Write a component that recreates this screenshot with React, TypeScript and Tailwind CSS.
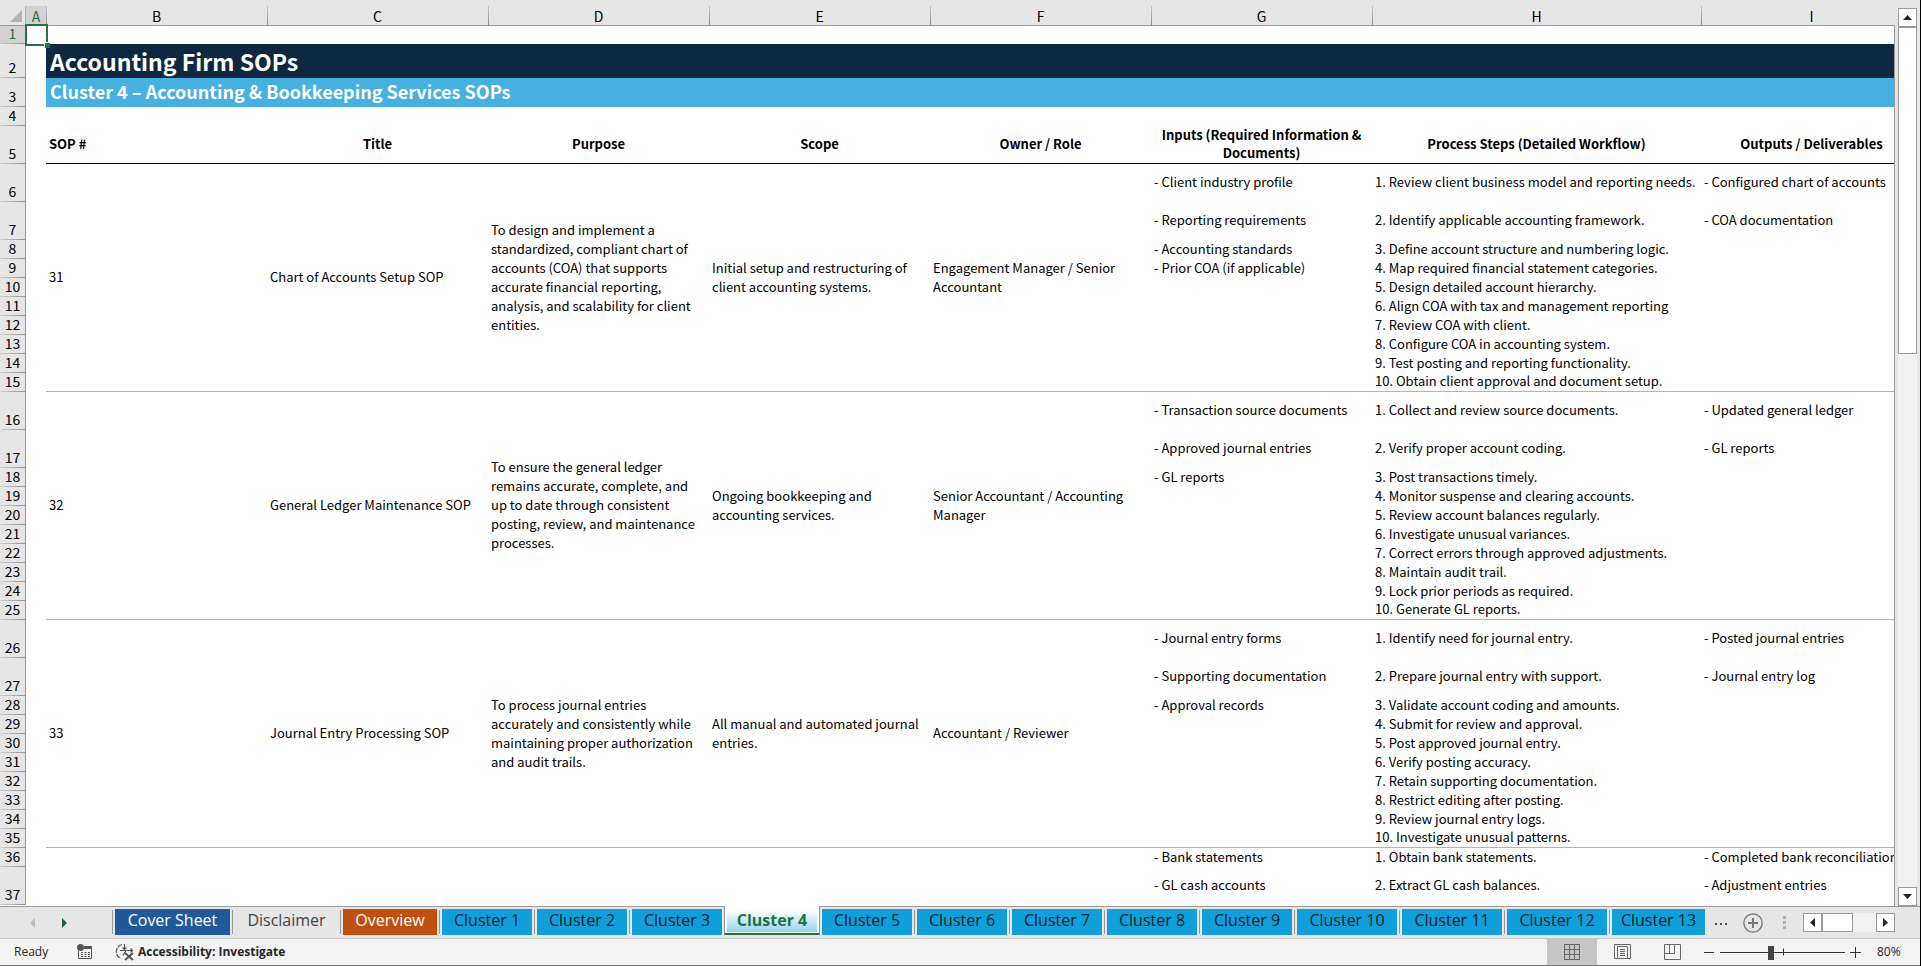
import clsx from "clsx";

const columns = ["A", "B", "C", "D", "E", "F", "G", "H", "I"];

const headings = [
  "Title",
  "Purpose",
  "Scope",
  "Owner / Role",
  "Inputs (Required Information & Documents)",
  "Process Steps (Detailed Workflow)",
  "Outputs / Deliverables",
];

interface Sop {
  id: string;
  title: string;
  purpose: string;
  scope: string;
  owner: string;
  inputs: string[];
  steps: string[];
  outputs: string[];
}

const sops: Sop[] = [
  {
    id: "31",
    title: "Chart of Accounts Setup SOP",
    purpose:
      "To design and implement a standardized, compliant chart of accounts (COA) that supports accurate financial reporting, analysis, and scalability for client entities.",
    scope: "Initial setup and restructuring of client accounting systems.",
    owner: "Engagement Manager / Senior Accountant",
    inputs: [
      "- Client industry profile",
      "- Reporting requirements",
      "- Accounting standards",
      "- Prior COA (if applicable)",
    ],
    steps: [
      "1. Review client business model and reporting needs.",
      "2. Identify applicable accounting framework.",
      "3. Define account structure and numbering logic.",
      "4. Map required financial statement categories.",
      "5. Design detailed account hierarchy.",
      "6. Align COA with tax and management reporting",
      "7. Review COA with client.",
      "8. Configure COA in accounting system.",
      "9. Test posting and reporting functionality.",
      "10. Obtain client approval and document setup.",
    ],
    outputs: ["- Configured chart of accounts", "- COA documentation"],
  },
  {
    id: "32",
    title: "General Ledger Maintenance SOP",
    purpose:
      "To ensure the general ledger remains accurate, complete, and up to date through consistent posting, review, and maintenance processes.",
    scope: "Ongoing bookkeeping and accounting services.",
    owner: "Senior Accountant / Accounting Manager",
    inputs: [
      "- Transaction source documents",
      "- Approved journal entries",
      "- GL reports",
    ],
    steps: [
      "1. Collect and review source documents.",
      "2. Verify proper account coding.",
      "3. Post transactions timely.",
      "4. Monitor suspense and clearing accounts.",
      "5. Review account balances regularly.",
      "6. Investigate unusual variances.",
      "7. Correct errors through approved adjustments.",
      "8. Maintain audit trail.",
      "9. Lock prior periods as required.",
      "10. Generate GL reports.",
    ],
    outputs: ["- Updated general ledger", "- GL reports"],
  },
  {
    id: "33",
    title: "Journal Entry Processing SOP",
    purpose:
      "To process journal entries accurately and consistently while maintaining proper authorization and audit trails.",
    scope: "All manual and automated journal entries.",
    owner: "Accountant / Reviewer",
    inputs: [
      "- Journal entry forms",
      "- Supporting documentation",
      "- Approval records",
    ],
    steps: [
      "1. Identify need for journal entry.",
      "2. Prepare journal entry with support.",
      "3. Validate account coding and amounts.",
      "4. Submit for review and approval.",
      "5. Post approved journal entry.",
      "6. Verify posting accuracy.",
      "7. Retain supporting documentation.",
      "8. Restrict editing after posting.",
      "9. Review journal entry logs.",
      "10. Investigate unusual patterns.",
    ],
    outputs: ["- Posted journal entries", "- Journal entry log"],
  },
];

const tabs = [
  { name: "Cover Sheet", style: "w-[115px] bg-[#215a9a] text-white" },
  { name: "Disclaimer", style: "w-[103px] text-[#444]" },
  { name: "Overview", style: "w-[94px] bg-[#c05012] text-white" },
  ...[1, 2, 3, 4, 5, 6, 7, 8, 9].map((n) => ({
    name: `Cluster ${n}`,
    style: "w-[90px] bg-[#109fd9] text-[#0b1e2b]",
  })),
  ...[10, 11, 12].map((n) => ({
    name: `Cluster ${n}`,
    style: "w-[100px] bg-[#109fd9] text-[#0b1e2b]",
  })),
  { name: "Cluster 13", style: "w-[93px] bg-[#109fd9] text-[#0b1e2b]" },
];

const activeTab = "Cluster 4";

const RowNumber = ({ n }: { n: number }) => (
  <th
    scope="row"
    className={clsx(
      "relative border-r border-[#999] p-0 pb-[4px] text-center align-bottom text-sm leading-[13px] font-normal",
      "after:absolute after:inset-x-0 after:bottom-0 after:h-px after:bg-linear-to-r after:from-[#cfcfcf] after:to-[#8f8f8f]",
      n === 1 ? "bg-[#d2d2d2] text-[#217346]" : "bg-[#e6e6e6]",
    )}
  >
    {n}
  </th>
);

const merged = "px-[3px] pb-[2px] align-middle leading-[19px] border-b border-[#b4b4b4]";
const line = "px-[3px] pb-[2px] align-middle leading-[16px] whitespace-nowrap";

const SopRows = ({ sop, start }: { sop: Sop; start: number }) => (
  <>
    {sop.steps.map((step, i) => {
      const cell = clsx(line, i === sop.steps.length - 1 && "border-b border-[#b4b4b4]");
      return (
        <tr key={step} className={i < 2 ? "h-[38px]" : "h-[19px]"}>
          <RowNumber n={start + i} />
          <td className="p-0"></td>
          {i === 0 && (
            <>
              <td rowSpan={10} className={merged}>{sop.id}</td>
              <td rowSpan={10} className={merged}>{sop.title}</td>
              <td rowSpan={10} className={merged}>{sop.purpose}</td>
              <td rowSpan={10} className={merged}>{sop.scope}</td>
              <td rowSpan={10} className={merged}>{sop.owner}</td>
            </>
          )}
          <td className={cell}>{sop.inputs[i]}</td>
          <td className={cell}>{step}</td>
          <td className={cell}>{sop.outputs[i]}</td>
        </tr>
      );
    })}
  </>
);

const Sheet = () => (
  <table className="w-full min-w-[1922px] table-fixed border-separate border-spacing-0 bg-white text-[13px] text-black">
    <colgroup>
      <col className="w-[26px]" />
      <col className="w-[20px]" />
      <col className="w-[221px]" />
      <col className="w-[221px]" />
      <col className="w-[221px]" />
      <col className="w-[221px]" />
      <col className="w-[221px]" />
      <col className="w-[221px]" />
      <col className="w-[329px]" />
      <col className="w-[221px]" />
    </colgroup>
    <thead>
      <tr className="h-[26px] bg-[#e6e6e6]">
        <td className="border-b border-[#999] p-0">
          <svg viewBox="0 0 26 25" className="block h-[25px] w-[26px]" aria-hidden="true">
            <path d="M22 10v12H10z" fill="#b2b2b2" />
            <path d="M25.500 6v19" stroke="#b0b0b0" />
          </svg>
        </td>
        {columns.map((c) => (
          <th
            key={c}
            scope="col"
            className={clsx(
              "relative border-b border-[#999] p-0 pt-[6px] text-center align-middle text-sm leading-4 font-normal",
              "after:absolute after:top-1.5 after:-right-px after:bottom-0 after:w-px after:bg-linear-to-b after:from-[#c4c4c4] after:to-[#8f8f8f]",
              c === "A" && "bg-linear-to-b from-[#e6e6e6] from-[6px] to-[#d2d2d2] to-[6px] text-[#217346]",
            )}
          >
            {c}
          </th>
        ))}
      </tr>
    </thead>
    <tbody>
      <tr className="h-[18px]">
        <RowNumber n={1} />
        <td className="relative p-0">
          {/* Selected cell */}
          <div className="absolute -top-[2px] -right-[2px] -bottom-[2px] -left-px z-10 border-2 border-[#217346]">
            <span className="absolute -right-1 -bottom-1 size-1.5 border-t border-l border-white bg-[#217346]"></span>
          </div>
        </td>
        <td colSpan={8} className="p-0"></td>
      </tr>
      <tr className="h-[34px]">
        <RowNumber n={2} />
        <td className="p-0"></td>
        <td colSpan={8} className="bg-[#0f2841] px-1 py-0 align-middle text-[23px] leading-7 font-bold text-white">
          Accounting Firm SOPs
        </td>
      </tr>
      <tr className="h-[29px]">
        <RowNumber n={3} />
        <td className="p-0"></td>
        <td colSpan={8} className="bg-[#46b1e1] px-1 py-0 pb-[3px] align-middle text-[18px] leading-6 font-bold text-white">
          Cluster 4 – Accounting &amp; Bookkeeping Services SOPs
        </td>
      </tr>
      <tr className="h-[19px]">
        <RowNumber n={4} />
        <td colSpan={9} className="p-0"></td>
      </tr>
      <tr className="h-[38px]">
        <RowNumber n={5} />
        <td className="p-0"></td>
        <th className="border-b border-black px-[3px] py-0 pb-px text-left align-middle leading-[18px] font-bold">SOP #</th>
        {headings.map((h) => (
          <th key={h} className="border-b border-black px-[3px] py-0 pb-px text-center align-middle leading-[18px] font-bold">
            {h}
          </th>
        ))}
      </tr>
      {sops.map((sop, i) => (
        <SopRows key={sop.id} sop={sop} start={6 + i * 10} />
      ))}
      <tr className="h-[19px]">
        <RowNumber n={36} />
        <td colSpan={6} className="p-0"></td>
        <td className={line}>- Bank statements</td>
        <td className={line}>1. Obtain bank statements.</td>
        <td className={line}>- Completed bank reconciliations</td>
      </tr>
      <tr className="h-[38px]">
        <RowNumber n={37} />
        <td colSpan={6} className="p-0"></td>
        <td className={line}>- GL cash accounts</td>
        <td className={line}>2. Extract GL cash balances.</td>
        <td className={line}>- Adjustment entries</td>
      </tr>
    </tbody>
  </table>
);

const scrollButton = "flex size-[19px] shrink-0 items-center justify-center border border-[#999] bg-white";

const VerticalScroll = () => (
  <div className="flex w-[25px] shrink-0 flex-col bg-[#e6e6e6] pt-2 pl-[3px]">
    <button aria-label="Scroll up" className={scrollButton}>
      <svg viewBox="0 0 9 5" className="h-[5px] w-[9px]"><path d="M0 5 4.500 0 9 5z" fill="#222" /></svg>
    </button>
    <div className="flex w-[19px] flex-1 flex-col bg-[#f1f1f1]">
      <div className="h-[38%] border border-[#999] bg-white"></div>
    </div>
    <button aria-label="Scroll down" className={scrollButton}>
      <svg viewBox="0 0 9 5" className="h-[5px] w-[9px]"><path d="M0 0h9L4.500 5z" fill="#222" /></svg>
    </button>
  </div>
);

const TabBar = () => (
  <div className="flex h-[33px] shrink-0 border-y border-t-[#999] border-b-[#c6c6c6] bg-[#e6e6e6] font-['Open_Sans',sans-serif]">
    <div className="flex w-[110px] shrink-0 items-center pl-[30px]">
      <button aria-label="Previous sheets">
        <svg viewBox="0 0 5 10" className="h-[10px] w-[5px]"><path d="M5 0v10L0 5z" fill="#bdbdbd" /></svg>
      </button>
      <button aria-label="Next sheets" className="ml-[27px]">
        <svg viewBox="0 0 5 10" className="h-[10px] w-[5px]"><path d="M0 0v10l5-5z" fill="#0e6b37" /></svg>
      </button>
    </div>
    <nav className="flex" aria-label="Sheets">
      {tabs.map((tab) =>
        tab.name === activeTab ? (
          <div key={tab.name} className="z-10 -mt-px -mr-[3px] ml-[2px] h-[29px] w-[96px] border-x border-b-2 border-x-[#999] border-b-[#217346] bg-white px-[2px] pb-px">
            <button className="block size-full bg-linear-to-b from-white from-15% to-[#93d3ee] pt-px text-base leading-[24px] font-bold text-[#217346]">
              {tab.name}
            </button>
          </div>
        ) : (
          <div key={tab.name} className="flex">
            <span className="mx-[2px] mt-[3px] h-6 w-px bg-[#999]"></span>
            <button className={clsx("mt-[2px] h-[26px] pb-[5px] text-base leading-[20px] whitespace-nowrap", tab.style)}>
              {tab.name}
            </button>
          </div>
        ),
      )}
    </nav>
    <div className="flex flex-1 items-center pr-[25px] pl-[10px]">
      <button aria-label="More sheets" className="flex gap-[3px] pt-[3px]">
        <i className="size-[2px] bg-[#217346]"></i>
        <i className="size-[2px] bg-[#217346]"></i>
        <i className="size-[2px] bg-[#217346]"></i>
      </button>
      <button aria-label="New sheet" className="ml-4">
        <svg viewBox="0 0 20 20" className="size-5" fill="none" stroke="#777">
          <circle cx="10" cy="10" r="9.200" strokeWidth="1.300" />
          <path d="M10 5v10M5 10h10" strokeWidth="2" />
        </svg>
      </button>
      <div className="ml-5 flex flex-col gap-[2px]">
        <i className="size-[3px] bg-[#b0b0b0]"></i>
        <i className="size-[3px] bg-[#b0b0b0]"></i>
        <i className="size-[3px] bg-[#b0b0b0]"></i>
      </div>
      <div className="ml-auto flex w-[92px] bg-[#f1f1f1]">
        <button aria-label="Scroll left" className={scrollButton}>
          <svg viewBox="0 0 5 9" className="h-[9px] w-[5px]"><path d="M5 0v9L0 4.500z" fill="#222" /></svg>
        </button>
        <div className="h-[19px] w-[31px] border border-[#999] bg-white"></div>
        <button aria-label="Scroll right" className={clsx(scrollButton, "ml-auto")}>
          <svg viewBox="0 0 5 9" className="h-[9px] w-[5px]"><path d="M0 0v9l5-4.500z" fill="#222" /></svg>
        </button>
      </div>
    </div>
  </div>
);

const StatusBar = () => (
  <div className="flex h-[27px] shrink-0 items-center border-b border-[#777] bg-[#f3f3f3] pl-[14px] font-['Open_Sans',sans-serif] text-xs text-[#262626]">
    <span className="w-[63px]">Ready</span>
    <button aria-label="Record macro">
      <svg viewBox="0 0 16 16" className="size-4" fill="none" stroke="#555">
        <path d="M1.500 7v7.500h13v-12H8" />
        <path d="M7 3.500h8" strokeWidth="3" />
        <path d="M4 8.500h2m1.500 0h2m1.500 0h2M4 10.500h2m1.500 0h2m1.500 0h2M4 12.500h2m1.500 0h2m1.500 0h2" />
        <circle cx="3.500" cy="3.500" r="3.500" fill="#555" stroke="none" />
      </svg>
    </button>
    <button className="ml-[22px] flex items-center gap-[3px] font-bold">
      <svg viewBox="0 0 20 18" className="h-[18px] w-5" fill="none" stroke="#555">
        <path d="M7 1.500C-.5 4-.5 12.500 6 15.500" strokeWidth="1.300" strokeDasharray="5 1" />
        <path d="M9.500 1v5M7.500 4.500l2 2 2-2M5 7.500h6l-3 5M12 7.500h6M15.500 5.500l2 2-2 2" strokeWidth="1.200" />
        <path d="m10 10 8 7M18 10l-8 7" strokeWidth="2" />
      </svg>
      Accessibility: Investigate
    </button>
    <div className="ml-auto flex h-full items-center">
      <button aria-label="Normal view" className="flex h-full w-[50px] items-center justify-center bg-[#c6c6c6]">
        <svg viewBox="0 0 16 16" className="size-4" fill="none" stroke="#666">
          <path d="M.5.500h15v15H.500zM5.500.500v15M10.500.500v15M.500 5.500h15M.500 10.500h15" />
        </svg>
      </button>
      <button aria-label="Page layout" className="flex h-full w-[50px] items-center justify-center">
        <svg viewBox="0 0 17 16" className="h-4 w-[17px]" fill="none" stroke="#666">
          <path d="M.5.500h16v14H.500zM3.500 2.500h10v12h-10zM6 5.500h5M6 7.500h5M6 9.500h5M6 11.500h5" />
        </svg>
      </button>
      <button aria-label="Page break preview" className="flex h-full w-[50px] items-center justify-center">
        <svg viewBox="0 0 17 16" className="h-4 w-[17px]" fill="none" stroke="#666">
          <path d="M.5.500h16v15H.500zM.500 9.500h10v-9M5.500.500v9" />
        </svg>
      </button>
      <button aria-label="Zoom out" className="ml-[7px] h-px w-[10px] bg-[#333]"></button>
      <div className="relative ml-[6px] flex w-[125px] items-center">
        <span className="absolute top-1/2 left-1/2 h-[7px] w-px -translate-y-1/2 bg-[#333]"></span>
        <input
          type="range"
          aria-label="Zoom"
          defaultValue={40}
          className="relative h-[14px] w-full appearance-none bg-transparent [&::-webkit-slider-runnable-track]:h-px [&::-webkit-slider-runnable-track]:bg-[#333] [&::-webkit-slider-thumb]:-mt-[6px] [&::-webkit-slider-thumb]:h-[14px] [&::-webkit-slider-thumb]:w-[6px] [&::-webkit-slider-thumb]:appearance-none [&::-webkit-slider-thumb]:bg-[#444]"
        />
      </div>
      <button aria-label="Zoom in" className="ml-[5px]">
        <svg viewBox="0 0 11 11" className="size-[11px]" stroke="#333"><path d="M5.500 0v11M0 5.500h11" /></svg>
      </button>
      <span className="w-[59px] pl-4">80%</span>
    </div>
  </div>
);

export default function App() {
  return (
    <div className="flex h-screen flex-col overflow-hidden border-r border-black bg-[#e6e6e6] font-['Noto_Sans_CJK_SC',sans-serif]">
      <div className="flex min-h-0 flex-1">
        <div className="relative min-w-0 flex-1 overflow-hidden bg-white">
          <Sheet />
          {/* Right edge of the grid, below the column letters */}
          <div className="absolute top-[25px] right-0 bottom-0 w-px bg-[#999]"></div>
        </div>
        <VerticalScroll />
      </div>
      <TabBar />
      <StatusBar />
    </div>
  );
}
